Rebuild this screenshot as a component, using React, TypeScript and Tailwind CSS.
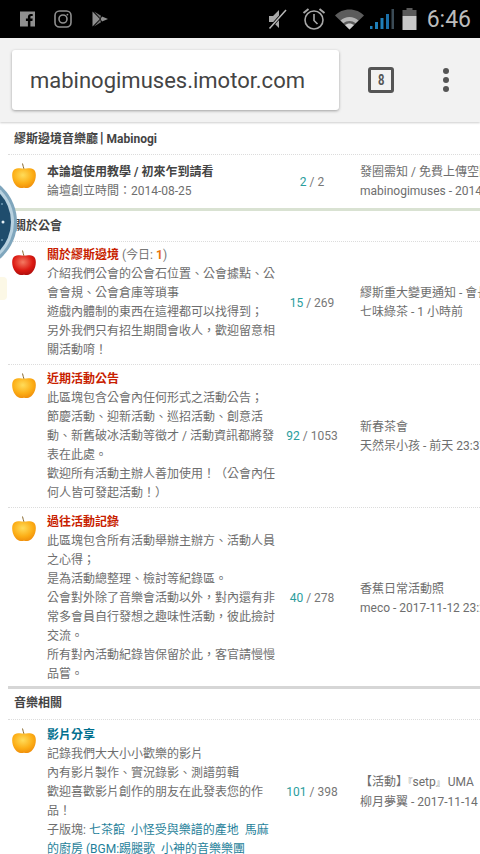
import { ReactNode } from 'react';

type Forum = {
  apple: 'orange' | 'red';
  title: string;
  titleColor: string;
  today?: number;
  body: ReactNode;
  topics: number;
  posts: number;
  lastTitle: ReactNode;
  lastBy: string;
  pad: string;
  appleTop: string;
};

const groups: { name: ReactNode; forums: Forum[]; rule: string; head: string }[] = [
  {
    name: (
      <>
        繆斯邊境音樂廳<span className="pl-[2px] pr-[3px] text-[14px] leading-none text-[#333333]">|</span>Mabinogi
      </>
    ),
    rule: 'border-[#d9e2d2]',
    head: 'h-[31px]',
    forums: [
      {
        apple: 'orange',
        title: '本論壇使用教學 / 初來乍到請看',
        titleColor: 'text-[#444444]',
        body: <>論壇創立時間：2014-08-25</>,
        topics: 2,
        posts: 2,
        lastTitle: '發圈需知 / 免費上傳空間',
        lastBy: 'mabinogimuses - 2014-08-25',
        pad: 'pt-[8px] pb-[7px]',
        appleTop: 'pt-0',
      },
    ],
  },
  {
    name: '關於公會',
    rule: 'border-[#d6d6d6]',
    head: 'h-[31px]',
    forums: [
      {
        apple: 'red',
        title: '關於繆斯邊境',
        titleColor: 'text-[#c81e00]',
        today: 1,
        body: (
          <>
            介紹我們公會的公會石位置、公會據點、公會會規、公會倉庫等瑣事
            <br />
            遊戲內體制的東西在這裡都可以找得到；
            <br />
            另外我們只有招生期間會收人，歡迎留意相關活動唷！
          </>
        ),
        topics: 15,
        posts: 269,
        lastTitle: '繆斯重大變更通知 - 會長',
        lastBy: '七味綠茶 - 1 小時前',
        pad: 'pt-[4px] pb-[4px]',
        appleTop: 'pt-[4px]',
      },
      {
        apple: 'orange',
        title: '近期活動公告',
        titleColor: 'text-[#c81e00]',
        body: (
          <>
            此區塊包含公會內任何形式之活動公告；
            <br />
            節慶活動、迎新活動、巡招活動、創意活動、新舊破冰活動等徵才 / 活動資訊都將發表在此處。
            <br />
            歡迎所有活動主辦人善加使用！（公會內任何人皆可發起活動！）
          </>
        ),
        topics: 92,
        posts: 1053,
        lastTitle: '新春茶會',
        lastBy: '天然呆小孩 - 前天 23:37',
        pad: 'pt-[5px] pb-[4px]',
        appleTop: 'pt-[3px]',
      },
      {
        apple: 'orange',
        title: '過往活動記錄',
        titleColor: 'text-[#c81e00]',
        body: (
          <>
            此區塊包含所有活動舉辦主辦方、活動人員之心得；
            <br />
            是為活動總整理、檢討等紀錄區。
            <br />
            公會對外除了音樂會活動以外，對內還有非常多會員自行發想之趣味性活動，彼此撿討交流。
            <br />
            所有對內活動紀錄皆保留於此，客官請慢慢品嘗。
          </>
        ),
        topics: 40,
        posts: 278,
        lastTitle: '香蕉日常活動照',
        lastBy: 'meco - 2017-11-12 23:27',
        pad: 'pt-[5px] pb-[2px]',
        appleTop: 'pt-[3px]',
      },
    ],
  },
  {
    name: '音樂相關',
    rule: 'border-[#d6d6d6]',
    head: 'h-[31px] pb-[2px]',
    forums: [
      {
        apple: 'orange',
        title: '影片分享',
        titleColor: 'text-[#006f8e]',
        body: (
          <>
            記錄我們大大小小歡樂的影片
            <br />
            內有影片製作、實況錄影、測譜剪輯
            <br />
            歡迎喜歡影片創作的朋友在此發表您的作品！
            <br />
            子版塊: <span className="text-[#1f7f9a]">七茶館</span>&nbsp; <span className="text-[#1f7f9a]">小怪受與樂譜的產地</span>&nbsp; <span className="text-[#1f7f9a]">馬麻的廚房 (BGM:踢腿歌</span>&nbsp; <span className="text-[#1f7f9a]">小神的音樂樂團</span>
          </>
        ),
        topics: 101,
        posts: 398,
        lastTitle: (
          <>
            【活動】<span className="align-top text-[9px]">『</span>setp<span className="text-[9px]">』</span> UMA
          </>
        ),
        lastBy: '柳月夢翼 - 2017-11-14 20:10',
        pad: 'pt-[6px] pb-[5px]',
        appleTop: 'pt-[2px]',
      },
    ],
  },
];

function Apple({ color }: { color: 'orange' | 'red' }) {
  const stops = color === 'red' ? ['#f47a62', '#dc1a12', '#a80c0c'] : ['#ffdc5a', '#fcae16', '#ee8a08'];
  const id = `apple-${color}`;
  return (
    <svg width="24" height="26" viewBox="0 0 24 26" className="block">
      <defs>
        <radialGradient id={id} cx="0.45" cy="0.35" r="0.7">
          <stop offset="0" stopColor={stops[0]} />
          <stop offset="0.6" stopColor={stops[1]} />
          <stop offset="1" stopColor={stops[2]} />
        </radialGradient>
      </defs>
      <path d="M10.500 0.500c0.300 2 1 3.500 1.500 5.500" stroke="#8a6a30" strokeWidth="1" fill="none" />
      <path
        d="M12 5.800c3-0.900 7.500-1 10 1 2 1.700 2.300 6 1.200 10-1 3.500-3.700 8-8 8.200-1.300 0.100-2.200-0.300-3.200-0.300s-1.900 0.400-3.200 0.300c-4.300-0.200-7-4.700-8-8.200-1.100-4-0.800-8.300 1.200-10 2.500-2 7-1.900 10-1z"
        fill={`url(#${id})`}
      />
    </svg>
  );
}

function ForumRow({ forum, last }: { forum: Forum; last: boolean }) {
  return (
    <div className={`flex ${forum.pad} ${last ? '' : 'border-b border-dotted border-[#dcdcdc]'}`}>
      <div className={`w-[39px] shrink-0 pl-1 ${forum.appleTop}`}>
        <Apple color={forum.apple} />
      </div>
      <div className="w-[235px] shrink-0 pr-[4px] text-[#6e6e6e]">
        <div>
          <span className={`font-bold ${forum.titleColor}`}>{forum.title}</span>
          {forum.today !== undefined && (
            <span className="text-[#777777]">
              {' '}
              (今日: <span className="font-bold text-[#e8720c]">{forum.today}</span>)
            </span>
          )}
        </div>
        <div>{forum.body}</div>
      </div>
      <div className="flex w-[60px] shrink-0 items-center justify-center whitespace-nowrap text-[#777777]">
        <span className="text-[#2a9d9d]">{forum.topics}</span>
        <span className="whitespace-pre"> / {forum.posts}</span>
      </div>
      <div className="flex flex-col justify-center whitespace-nowrap pl-[18px] text-[#6e6e6e]">
        <div>{forum.lastTitle}</div>
        <div>{forum.lastBy}</div>
      </div>
    </div>
  );
}

function StatusIcons() {
  return (
    <div className="flex h-[38px] items-center bg-black pl-5 pr-[9px] text-[#8f8f8f]">
      <svg width="15" height="16" viewBox="0 0 15 16" className="mr-[19px]">
        <path d="M0 0.500h15v15h-4.600v-5.600h2l0.300-2.300h-2.300V6.200c0-0.700 0.200-1.100 1.100-1.100h1.200V3c-0.300 0-1-0.100-1.800-0.100-1.800 0-3 1.100-3 3.100v1.600h-2v2.300h2v5.600H0z" fill="currentColor" />
      </svg>
      <svg width="18" height="18" viewBox="0 0 18 18" fill="none" stroke="currentColor" className="mr-[20px]">
        <rect x="1" y="1" width="16" height="16" rx="4.500" strokeWidth="1.600" />
        <circle cx="9" cy="9" r="4" strokeWidth="1.600" />
        <circle cx="13.400" cy="4.600" r="0.900" fill="currentColor" stroke="none" />
      </svg>
      <svg width="17" height="16" viewBox="0 0 17 16" fill="currentColor">
        <path d="M0.500 0.500l7.400 7.500-7.400 7.500z" />
        <path d="M2 0.500l7 4.200-0.800 2.600z" opacity="0.8" />
        <path d="M2 15.500l7-4.200-0.800-2.600z" opacity="0.8" />
        <path d="M10 5.500l6 2.500-6 2.500-1.500-2.500z" />
      </svg>
      <div className="flex-1" />
      <svg width="20" height="24" viewBox="0 0 20 24" fill="#a8a8a8" className="mr-[14px]">
        <path d="M1 9h4l6-6v18l-6-6H1z" />
        <path d="M1 22L18 3" stroke="#000" strokeWidth="3" />
        <path d="M1.500 21.500L18 3" stroke="#b8b8b8" strokeWidth="1.500" />
      </svg>
      <svg width="24" height="24" viewBox="0 0 24 24" fill="none" stroke="#a8a8a8" strokeWidth="1.600" className="mr-[9px]">
        <circle cx="12" cy="13" r="9" />
        <path d="M12 7v6.500l3.500 3.500" />
        <path d="M1.500 6l5-4M22.500 6l-5-4" strokeWidth="2" />
      </svg>
      <svg width="29" height="21" viewBox="0 0 29 21" className="mr-[6px]">
        <path d="M0 6.500C3.500 2.800 8.700 0.500 14.500 0.500S25.500 2.800 29 6.500L14.500 20.500z" fill="#5c5c5c" />
        <path d="M5.500 11.500c2.400-2.200 5.600-3.500 9-3.500s6.600 1.300 9 3.500l-3 2.800c-1.600-1.400-3.700-2.300-6-2.300s-4.400 0.900-6 2.300z" fill="#b4b4b4" />
        <path d="M10 16c1.200-1 2.800-1.600 4.500-1.600S17.800 15 19 16l-4.500 4.500z" fill="#d0d0d0" />
      </svg>
      <svg width="25" height="24" viewBox="0 0 25 24" className="mr-[7px]">
        <path d="M0 22h2.500v-3H0zM5 22h3v-7H5zM10.500 22h3V11h-3z" fill="#1f7fb8" />
        <path d="M16 22h3V7h-3z" fill="#1a6fa8" />
        <path d="M21.500 22H24V2h-2.500z" fill="#3a4a55" />
      </svg>
      <svg width="15" height="24" viewBox="0 0 15 24" className="mr-[10px]">
        <path d="M4.500 1h6v2h4v6H0.500V3h4z" fill="#5a5a5a" />
        <path d="M0.500 9h14v14H0.500z" fill="#c8c8c8" />
      </svg>
      <span className="text-[23px] leading-none text-[#bcbcbc]">6:46</span>
    </div>
  );
}

function Toolbar() {
  return (
    <div className="flex h-[84px] items-center bg-[#f2f2f2] pl-3 shadow-[0_1px_2px_rgba(0,0,0,0.2)]">
      <div className="flex h-[60px] w-[327px] items-center rounded-[3px] bg-white pl-[18px] text-[22px] text-[#444444] shadow-[0_1px_3px_rgba(0,0,0,0.35)]">
        mabinogimuses.imotor.com
      </div>
      <div className="ml-[29px] flex h-[26px] w-[26px] items-center justify-center rounded-[3px] border-[3px] border-[#555555] text-[15px] font-bold text-[#555555]">
        <span className="scale-x-75">8</span>
      </div>
      <div className="ml-[49px] flex flex-col gap-[3px]">
        <div className="h-[6px] w-[6px] rounded-full bg-[#555555]" />
        <div className="h-[6px] w-[6px] rounded-full bg-[#555555]" />
        <div className="h-[6px] w-[6px] rounded-full bg-[#555555]" />
      </div>
    </div>
  );
}

export default function App() {
  return (
    <div className="relative h-[854px] w-[480px] overflow-hidden bg-white text-[12px] leading-[19px] [font-family:Roboto,'Noto_Sans_CJK_TC',sans-serif]">
      <StatusIcons />
      <Toolbar />
      <div className="pl-2 pt-[2px]">
        {groups.map((group, g) => (
          <div key={g} className={`border-b-[3px] ${group.rule}`}>
            <div className={`flex items-center border-b border-dotted border-[#dcdcdc] pl-[6px] font-bold text-[#444444] ${group.head}`}>
              <span>{group.name}</span>
            </div>
            {group.forums.map((forum, i) => (
              <ForumRow key={forum.title} forum={forum} last={i === group.forums.length - 1 && g !== groups.length - 1} />
            ))}
          </div>
        ))}
      </div>
      {/* floating badge that sits over the list on the left edge */}
      <svg width="20" height="100" viewBox="0 0 20 100" className="absolute left-0 top-[172px]">
        <circle cx="-31" cy="50" r="48" fill="#7fa6bd" />
        <circle cx="-31" cy="50" r="45" fill="#b9d2e0" />
        <circle cx="-31" cy="50" r="42" fill="#1f4d6d" />
        <circle cx="3" cy="50" r="1.500" fill="#e6f0f5" />
        <circle cx="2" cy="32" r="1" fill="#6f9ab3" />
        <circle cx="2" cy="68" r="1" fill="#6f9ab3" />
      </svg>
      <div className="absolute left-0 top-[277px] h-[23px] w-[7px] rounded-r-[4px] bg-[#fcf8e6]" />
    </div>
  );
}
